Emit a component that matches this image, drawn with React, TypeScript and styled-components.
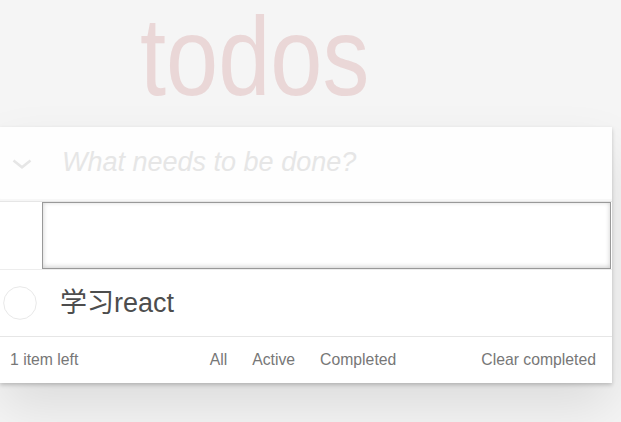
import React from 'react';
import styled, { createGlobalStyle } from 'styled-components';

const GlobalStyle = createGlobalStyle`
  html, body { margin: 0; padding: 0; }
  body {
    background: #f5f5f5;
    font-family: "Liberation Sans", Arial, "Noto Sans CJK SC", sans-serif;
    color: #4d4d4d;
  }
  * { box-sizing: border-box; }
`;

const Page = styled.div`
  width: 621px;
  height: 422px;
  overflow: hidden;
`;

const TitleBar = styled.div`
  height: 127px;
  padding: 1px 0 0 140px;
`;

const Title = styled.h1`
  display: inline-block;
  margin: 0;
  font-family: "Liberation Sans", Arial, sans-serif;
  font-size: 112px;
  line-height: 112px;
  font-weight: 400;
  color: rgba(175, 47, 47, 0.15);
  transform: scaleX(0.837);
  transform-origin: 0 0;
`;

const TodoApp = styled.section`
  width: 612px;
  background: #fff;
  box-shadow: 0 2px 4px 0 rgba(0, 0, 0, 0.2), 0 25px 50px 0 rgba(0, 0, 0, 0.1);
`;

const Header = styled.header`
  display: flex;
  align-items: center;
  height: 74px;
  background: rgba(0, 0, 0, 0.003);
  box-shadow: inset 0 -2px 1px rgba(0, 0, 0, 0.03);
`;

const ToggleAll = styled.label`
  display: flex;
  align-items: center;
  width: 62px;
  height: 100%;
  padding-left: 12px;
`;

const NewTodo = styled.input`
  flex: 1;
  height: 100%;
  border: none;
  outline: none;
  background: transparent;
  padding: 0 16px 3px 0;
  font-family: inherit;
  font-size: 27px;
  color: #4d4d4d;
  &::placeholder {
    font-style: italic;
    color: #e6e6e6;
  }
`;

const Main = styled.section`
  border-top: 1px solid #e6e6e6;
`;

const TodoList = styled.ul`
  margin: 0;
  padding: 0;
  list-style: none;
`;

const EditItem = styled.li`
  padding: 0 1px 0 42px;
  border-bottom: 1px solid #ededed;
`;

const EditInput = styled.input`
  display: block;
  width: 100%;
  height: 67px;
  margin: 0;
  padding: 0 16px;
  border: 1px solid #999;
  box-shadow: inset 0 -1px 5px 0 rgba(0, 0, 0, 0.2);
  outline: none;
  background: #fff;
  font-family: inherit;
  font-size: 27px;
  color: #4d4d4d;
`;

const TodoItem = styled.li`
  display: flex;
  align-items: center;
  height: 66px;
`;

const Toggle = styled.span`
  display: flex;
  width: 34px;
  height: 34px;
  margin: 0 23px 0 3px;
`;

const Label = styled.label`
  font-family: "Liberation Sans", Arial, "Noto Sans CJK SC", sans-serif;
  font-size: 27px;
  line-height: 1.2;
  color: #4d4d4d;
`;

const Footer = styled.footer`
  display: grid;
  grid-template-columns: 1fr auto 1fr;
  align-items: center;
  height: 47px;
  padding: 0 16px 0 10px;
  border-top: 1px solid #e6e6e6;
  color: #777;
  font-size: 15.75px;
  line-height: 22px;
`;

const Count = styled.span`
  justify-self: start;
`;

const Filters = styled.ul`
  display: flex;
  gap: 25px;
  margin: 0;
  padding: 0;
  list-style: none;
`;

const FilterLink = styled.a`
  color: inherit;
  text-decoration: none;
`;

const ClearButton = styled.button`
  justify-self: end;
  margin: 0;
  padding: 0;
  border: none;
  background: none;
  font: inherit;
  color: inherit;
  cursor: pointer;
`;

export default function App() {
  return (
    <Page>
      <GlobalStyle />
      <TitleBar>
        <Title>todos</Title>
      </TitleBar>
      <TodoApp>
        <Header>
          <ToggleAll>
            <svg width="20" height="10" viewBox="0 0 20 10">
              <path d="M1.5 1.5 L10 8.3 L18.5 1.5" fill="none" stroke="#e6e6e6" strokeWidth="2.6" />
            </svg>
          </ToggleAll>
          <NewTodo placeholder="What needs to be done?" />
        </Header>
        <Main>
          <TodoList>
            <EditItem>
              <EditInput defaultValue="" />
            </EditItem>
            <TodoItem>
              <Toggle>
                <svg width="34" height="34" viewBox="0 0 34 34">
                  <circle cx="17" cy="17" r="16.3" fill="none" stroke="#e8e8e8" strokeWidth="1" />
                </svg>
              </Toggle>
              <Label>学习react</Label>
            </TodoItem>
          </TodoList>
        </Main>
        <Footer>
          <Count>1 item left</Count>
          <Filters>
            <li><FilterLink href="#/">All</FilterLink></li>
            <li><FilterLink href="#/active">Active</FilterLink></li>
            <li><FilterLink href="#/completed">Completed</FilterLink></li>
          </Filters>
          <ClearButton>Clear completed</ClearButton>
        </Footer>
      </TodoApp>
    </Page>
  );
}
